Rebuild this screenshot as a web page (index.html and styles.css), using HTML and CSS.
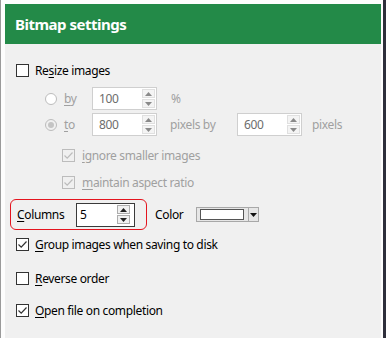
FILE: index.html
```html
<!DOCTYPE html>
<html lang="en">
<head>
  <meta charset="UTF-8">
  <title>Bitmap settings</title>
  <link rel="stylesheet" href="styles.css">
</head>
<body>

  <div class="window">
    <div class="header">Bitmap settings</div>

    <div class="content">
      <!-- Resize -->
      <div class="row row-resize">
        <span class="check"></span>
        <span class="label">Re<u>s</u>ize images</span>
      </div>

      <div class="row row-by indent-radio">
        <span class="radio"></span>
        <span class="label dim radio-label"><u>b</u>y</span>
        <div class="spin off">
          <span class="spin-value">100</span>
          <span class="spin-btns">
            <span class="spin-btn"><svg width="7" height="4" viewBox="0 0 7 4"><path d="M0 4 L3.5 0 L7 4 Z"/></svg></span>
            <span class="spin-btn"><svg width="7" height="4" viewBox="0 0 7 4"><path d="M0 0 L3.5 4 L7 0 Z"/></svg></span>
          </span>
        </div>
        <span class="label dim unit">%</span>
      </div>

      <div class="row row-to indent-radio">
        <span class="radio selected"><span class="dot"></span></span>
        <span class="label dim radio-label"><u>t</u>o</span>
        <div class="spin off">
          <span class="spin-value">800</span>
          <span class="spin-btns">
            <span class="spin-btn"><svg width="7" height="4" viewBox="0 0 7 4"><path d="M0 4 L3.5 0 L7 4 Z"/></svg></span>
            <span class="spin-btn"><svg width="7" height="4" viewBox="0 0 7 4"><path d="M0 0 L3.5 4 L7 0 Z"/></svg></span>
          </span>
        </div>
        <span class="label dim unit pixels-by">pixels by</span>
        <div class="spin off">
          <span class="spin-value">600</span>
          <span class="spin-btns">
            <span class="spin-btn"><svg width="7" height="4" viewBox="0 0 7 4"><path d="M0 4 L3.5 0 L7 4 Z"/></svg></span>
            <span class="spin-btn"><svg width="7" height="4" viewBox="0 0 7 4"><path d="M0 0 L3.5 4 L7 0 Z"/></svg></span>
          </span>
        </div>
        <span class="label dim pixels">pixels</span>
      </div>

      <div class="row row-ignore indent-check">
        <span class="check off"><svg width="11" height="11" viewBox="0 0 11 11"><path d="M1.5 5.5 L4.2 8.2 L9.5 2.5" /></svg></span>
        <span class="label dim"><u>i</u>gnore smaller images</span>
      </div>

      <div class="row row-aspect indent-check">
        <span class="check off"><svg width="11" height="11" viewBox="0 0 11 11"><path d="M1.5 5.5 L4.2 8.2 L9.5 2.5" /></svg></span>
        <span class="label dim"><u>m</u>aintain aspect ratio</span>
      </div>

      <!-- Columns / colour -->
      <div class="row row-columns">
        <div class="highlight">
          <span class="label"><u>C</u>olumns</span>
          <div class="spin on">
            <span class="spin-value">5</span>
            <span class="spin-btns">
              <span class="spin-btn"><svg width="7" height="4" viewBox="0 0 7 4"><path d="M0 4 L3.5 0 L7 4 Z"/></svg></span>
              <span class="spin-btn"><svg width="7" height="4" viewBox="0 0 7 4"><path d="M0 0 L3.5 4 L7 0 Z"/></svg></span>
            </span>
          </div>
        </div>
        <span class="label color-label">Color</span>
        <div class="color-pick">
          <span class="swatch"></span>
          <span class="color-arrow"><svg width="7" height="4" viewBox="0 0 7 4"><path d="M0 0 L3.5 4 L7 0 Z"/></svg></span>
        </div>
      </div>

      <div class="row row-group">
        <span class="check"><svg width="11" height="11" viewBox="0 0 11 11"><path d="M1.5 5.5 L4.2 8.2 L9.5 2.5" /></svg></span>
        <span class="label"><u>G</u>roup images when saving to disk</span>
      </div>

      <div class="row row-reverse">
        <span class="check"></span>
        <span class="label"><u>R</u>everse order</span>
      </div>

      <div class="row row-open">
        <span class="check"><svg width="11" height="11" viewBox="0 0 11 11"><path d="M1.5 5.5 L4.2 8.2 L9.5 2.5" /></svg></span>
        <span class="label"><u>O</u>pen file on completion</span>
      </div>
    </div>
  </div>

</body>
</html>
```

FILE: styles.css
```css
html, body {
  margin: 0;
  height: 100%;
}

body {
  background-color: #2e2f3b;
  font-family: 'Noto Sans', 'Open Sans', sans-serif;
  font-size: 12px;
  letter-spacing: -0.35px;
  color: #000;
}

.window {
  width: 383px;
  height: 100%;
  box-sizing: border-box;
  background-color: #fdfdfd;
  border-left: 1px solid #9a9a9a;
  padding: 4px 2px 0 4px;
  display: flex;
  flex-direction: column;
}

.header {
  height: 40px;
  flex: none;
  background-color: #238a48;
  color: #fff;
  font-weight: bold;
  font-size: 15px;
  letter-spacing: -0.5px;
  padding-left: 10px;
  display: flex;
  align-items: center;
}

.content {
  flex: 1;
  background-color: #f0f0f0;
  padding: 16px 0 0 11px;
}

.row {
  display: flex;
  align-items: center;
  height: 20px;
}

.label u {
  text-decoration-thickness: 1px;
  text-underline-offset: 2px;
}

.dim {
  color: #a0a0a0;
}

/* checkboxes & radios */
.check {
  width: 13px;
  height: 13px;
  box-sizing: border-box;
  border: 1px solid #333;
  background-color: #fff;
  margin-right: 6px;
  display: flex;
  align-items: center;
  justify-content: center;
  flex: none;
}

.check svg path {
  fill: none;
  stroke: #333;
  stroke-width: 1.2;
}

.check.off {
  border-color: #bcbcbc;
  background-color: #f0f0f0;
}

.check.off svg path {
  stroke: #bcbcbc;
}

.radio {
  width: 12px;
  height: 12px;
  box-sizing: border-box;
  border: 1px solid #bcbcbc;
  border-radius: 50%;
  background-color: #fff;
  display: flex;
  align-items: center;
  justify-content: center;
  flex: none;
}

.radio.selected {
  background-color: #f0f0f0;
}

.radio .dot {
  width: 6px;
  height: 6px;
  border-radius: 50%;
  background-color: #c4c4c4;
}

.radio-label {
  width: 28px;
  margin-left: 7px;
}

/* spin boxes */
.spin {
  width: 65px;
  height: 23px;
  box-sizing: border-box;
  border: 1px solid #cfcfcf;
  background-color: #fff;
  display: flex;
  align-items: center;
  padding: 0 1px 0 6px;
  flex: none;
}

.spin-value {
  flex: 1;
  color: #6d6d6d;
}

.spin-btns {
  display: flex;
  flex-direction: column;
  gap: 1px;
}

.spin-btn {
  width: 13px;
  height: 9px;
  box-sizing: border-box;
  border: 1px solid #e0e0e0;
  background-color: #f4f4f4;
  display: flex;
  align-items: center;
  justify-content: center;
}

.spin-btn svg path {
  fill: #8a8a8a;
}

.spin.on {
  width: 59px;
  height: 24px;
  border-color: #3a3a3a;
  padding-left: 3px;
  padding-right: 4px;
}

.spin.on .spin-value {
  color: #000;
}

.spin.on .spin-btn {
  border-color: #adadad;
  background-color: #f0f0f0;
}

.spin.on .spin-btn svg path {
  fill: #222;
}

.unit {
  margin-left: 14px;
}

.pixels-by {
  width: 67px;
  margin-left: 13px;
}

.pixels {
  margin-left: 10px;
}

.indent-radio {
  padding-left: 29px;
}

.indent-check {
  padding-left: 46px;
}

.indent-check .check {
  margin-right: 7px;
}

/* row spacing */
.row-resize { height: 21px; }
.row-by { height: 23px; margin-top: 6px; }
.row-to { height: 23px; margin-top: 3px; }
.row-ignore { margin-top: 9px; }
.row-aspect { margin-top: 7px; }
.row-columns { height: 31px; margin-top: 7px; }
.row-group { margin-top: 4px; }
.row-reverse { margin-top: 14px; }
.row-open { margin-top: 12px; }

/* columns highlight */
.highlight {
  margin-left: -6px;
  width: 137px;
  height: 31px;
  box-sizing: border-box;
  border: 1.5px solid #e4141e;
  border-radius: 6px;
  display: flex;
  align-items: center;
  padding-left: 6px;
}

.highlight .label {
  width: 59px;
}

.color-label {
  margin-left: 8px;
  width: 41px;
}

.color-pick {
  width: 63px;
  height: 15px;
  box-sizing: border-box;
  border: 1px solid #a8a8a8;
  background-color: #e6e6e6;
  display: flex;
  align-items: center;
  padding-left: 3px;
}

.swatch {
  width: 44px;
  height: 11px;
  box-sizing: border-box;
  border: 1px solid #555;
  background-color: #fff;
}

.color-arrow {
  flex: 1;
  height: 100%;
  margin-left: 4px;
  border-left: 1px solid #a8a8a8;
  display: flex;
  align-items: center;
  justify-content: center;
}

.color-arrow svg path {
  fill: #111;
}
```
